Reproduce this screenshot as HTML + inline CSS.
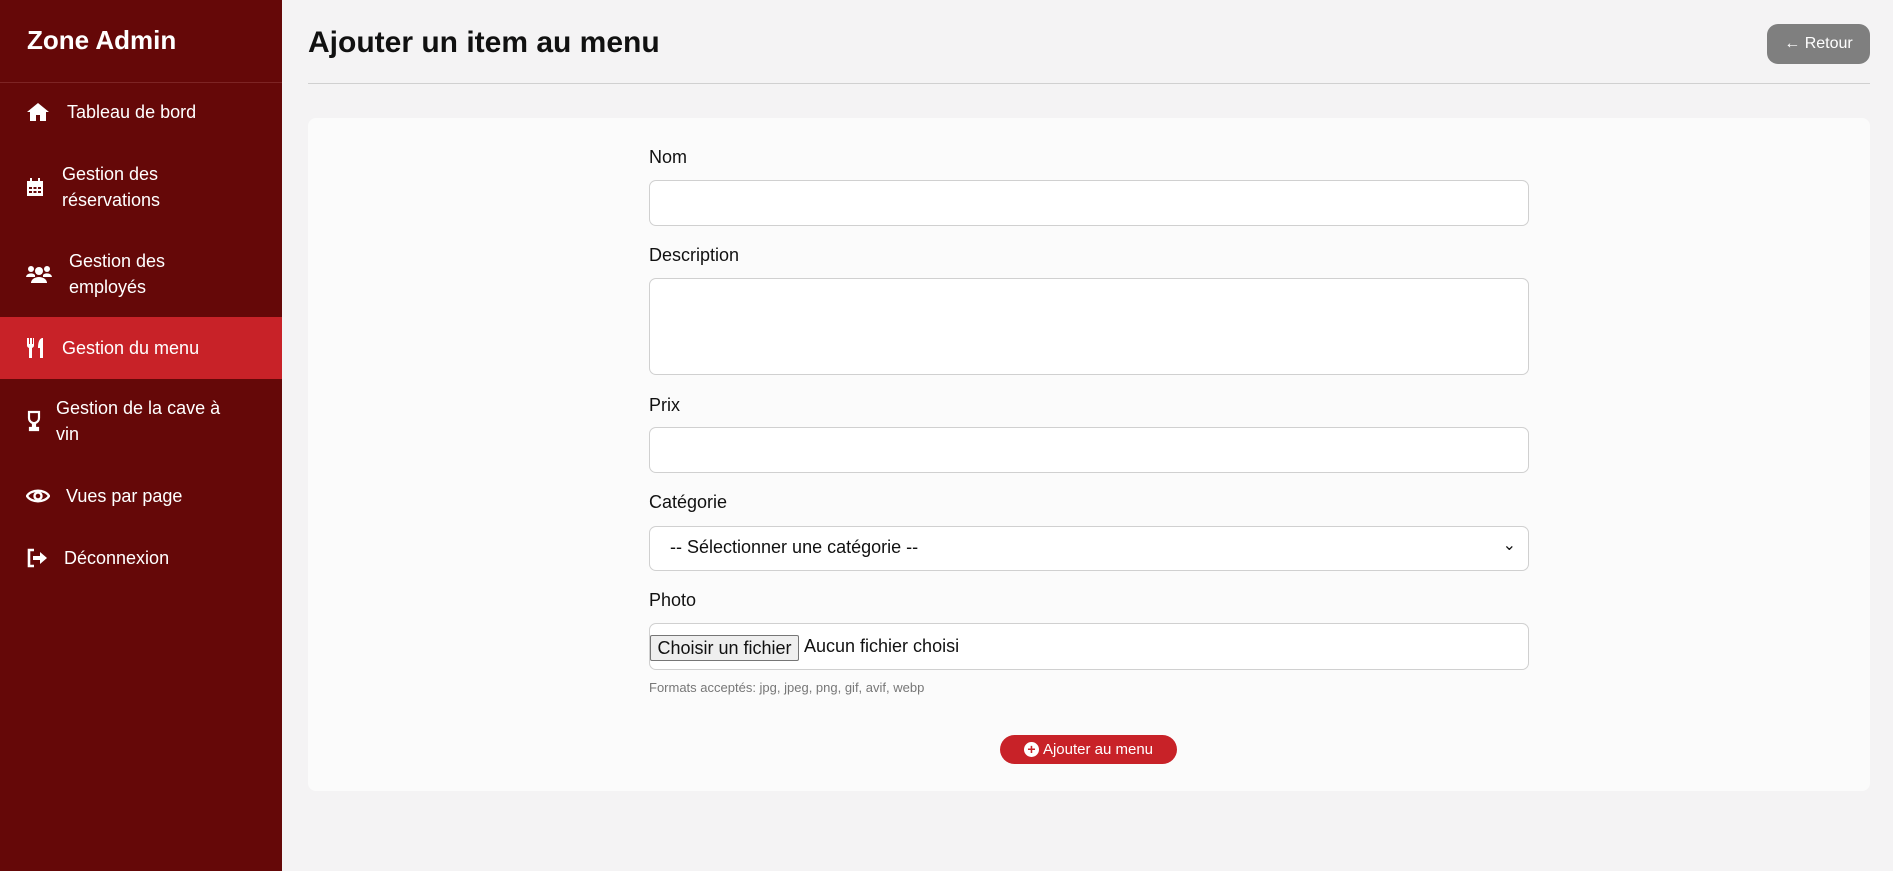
<!DOCTYPE html>
<html><head><meta charset="utf-8"><style>
*{box-sizing:border-box;margin:0;padding:0}
body{width:1893px;height:871px;background:#f4f3f4;font-family:"Liberation Sans",sans-serif;position:relative;overflow:hidden}
.sb{position:absolute;left:0;top:0;width:282px;height:871px;background:#650808;color:#fff}
.sb h1{position:absolute;left:27px;top:25px;font-size:26px;font-weight:bold}
.sb .hr{position:absolute;left:0;top:82px;width:282px;height:1px;background:#7d2424}
.it{position:absolute;left:0;width:282px;display:flex;align-items:center;font-size:18px;line-height:26px}
.it svg{position:absolute;left:26px}
.act{background:#c82228}
.main h2{position:absolute;left:308px;top:26px;font-size:30px;font-weight:bold;color:#111}
.line{position:absolute;left:308px;top:83px;width:1562px;height:1px;background:#d0d0d0}
.ret{position:absolute;left:1767px;top:24px;width:103px;height:40px;background:#7f7f7f;border-radius:11px;color:#fff;font-size:16px;display:flex;align-items:center;justify-content:center}
.card{position:absolute;left:308px;top:118px;width:1562px;height:673px;background:#fbfbfb;border-radius:8px}
.lb{position:absolute;left:649px;font-size:18px;color:#111}
.in{position:absolute;left:649px;width:880px;background:#fff;border:1px solid #d0d0d0;border-radius:7px}
.help{position:absolute;left:649px;top:680px;font-size:13px;color:#777;white-space:nowrap}
.btn{position:absolute;left:1000px;top:735px;width:177px;height:29px;background:#c82228;border-radius:15px;color:#fff;font-size:15px;display:flex;align-items:center;justify-content:center;gap:4px}
</style></head><body>
<div class="sb">
<h1>Zone Admin</h1><div class="hr"></div>
<div class="it" style="top:98px;height:28px"><svg width="24" height="20" viewBox="0 0 24 20"><path d="M12 1L1 10h3v9h6v-6h4v6h6v-9h3z" fill="#fff"/></svg><span style="margin-left:67px">Tableau de bord</span></div>
<div class="it" style="top:160px;height:54px"><svg width="18" height="20" viewBox="0 0 18 20"><path d="M1 4h16v15H1z M4 1h2v4H4z M12 1h2v4h-2z" fill="#fff"/><g fill="#650808"><rect x="3" y="10" width="3" height="2"/><rect x="7.5" y="10" width="3" height="2"/><rect x="12" y="10" width="3" height="2"/><rect x="3" y="14" width="3" height="2"/><rect x="7.5" y="14" width="3" height="2"/><rect x="12" y="14" width="3" height="2"/></g></svg><span style="margin-left:62px">Gestion des<br>réservations</span></div>
<div class="it" style="top:247px;height:54px"><svg width="26" height="20" viewBox="0 0 26 20"><circle cx="5" cy="5" r="3" fill="#fff"/><circle cx="21" cy="5" r="3" fill="#fff"/><circle cx="13" cy="7" r="4" fill="#fff"/><path d="M0 13a5 4 0 0 1 9-2v2zM26 13a5 4 0 0 0-9-2v2zM5 19a8 6 0 0 1 16 0z" fill="#fff"/></svg><span style="margin-left:69px">Gestion des<br>employés</span></div>
<div class="it act" style="top:317px;height:62px"><svg width="20" height="22" viewBox="0 0 20 22"><path d="M1 1v7a3 3 0 0 0 2 3v10h3V11a3 3 0 0 0 2-3V1H7v6H6V1H4v6H3V1z M16 1c-3 1-4 5-4 10h2v10h3V1z" fill="#fff"/></svg><span style="margin-left:62px">Gestion du menu</span></div>
<div class="it" style="top:394px;height:54px"><svg width="16" height="22" viewBox="0 0 16 22"><path d="M3 2h10v6a5 5 0 0 1-4 5v5h3v2H4v-2h3v-5a5 5 0 0 1-4-5z" fill="none" stroke="#fff" stroke-width="2.2"/></svg><span style="margin-left:56px">Gestion de la cave à<br>vin</span></div>
<div class="it" style="top:482px;height:28px"><svg width="24" height="18" viewBox="0 0 24 18"><path d="M1 9C5 2 19 2 23 9C19 16 5 16 1 9z" fill="none" stroke="#fff" stroke-width="2.4"/><circle cx="12" cy="9" r="3.5" fill="none" stroke="#fff" stroke-width="2.4"/></svg><span style="margin-left:66px">Vues par page</span></div>
<div class="it" style="top:544px;height:28px"><svg width="22" height="20" viewBox="0 0 22 20"><path d="M8 2H3v16h5" fill="none" stroke="#fff" stroke-width="2.6"/><path d="M7 8h7V4l7 6-7 6v-4H7z" fill="#fff"/></svg><span style="margin-left:64px">Déconnexion</span></div>
</div>
<div class="main">
<h2>Ajouter un item au menu</h2><div class="line"></div>
<div class="ret">&#8592; Retour</div>
<div class="card"></div>
<div class="lb" style="top:147px">Nom</div><div class="in" style="top:180px;height:46px"></div>
<div class="lb" style="top:245px">Description</div><div class="in" style="top:278px;height:97px"></div>
<div class="lb" style="top:395px">Prix</div><div class="in" style="top:427px;height:46px"></div>
<div class="lb" style="top:492px">Catégorie</div><div class="in" style="top:526px;height:45px;font-size:18px;padding:10px 20px;color:#111">-- Sélectionner une catégorie --<span style="position:absolute;right:12px;top:8px;font-size:16px">&#8964;</span></div>
<div class="lb" style="top:590px">Photo</div><div class="in" style="top:623px;height:47px;font-size:18px;color:#111;white-space:nowrap"><span style="position:absolute;left:0px;top:11px;height:26px;width:149px;background:#efefef;border:1px solid #767676;border-radius:2px;text-align:center;line-height:24px;font-size:18px">Choisir un fichier</span><span style="position:absolute;left:154px;top:12px">Aucun fichier choisi</span></div>
<div class="help">Formats acceptés: jpg, jpeg, png, gif, avif, webp</div>
<div class="btn"><span style="display:inline-block;width:15px;height:15px;border-radius:50%;background:#fff;color:#c82228;font-size:14px;line-height:15px;text-align:center;font-weight:bold">+</span>Ajouter au menu</div>
</div>
</body></html>
